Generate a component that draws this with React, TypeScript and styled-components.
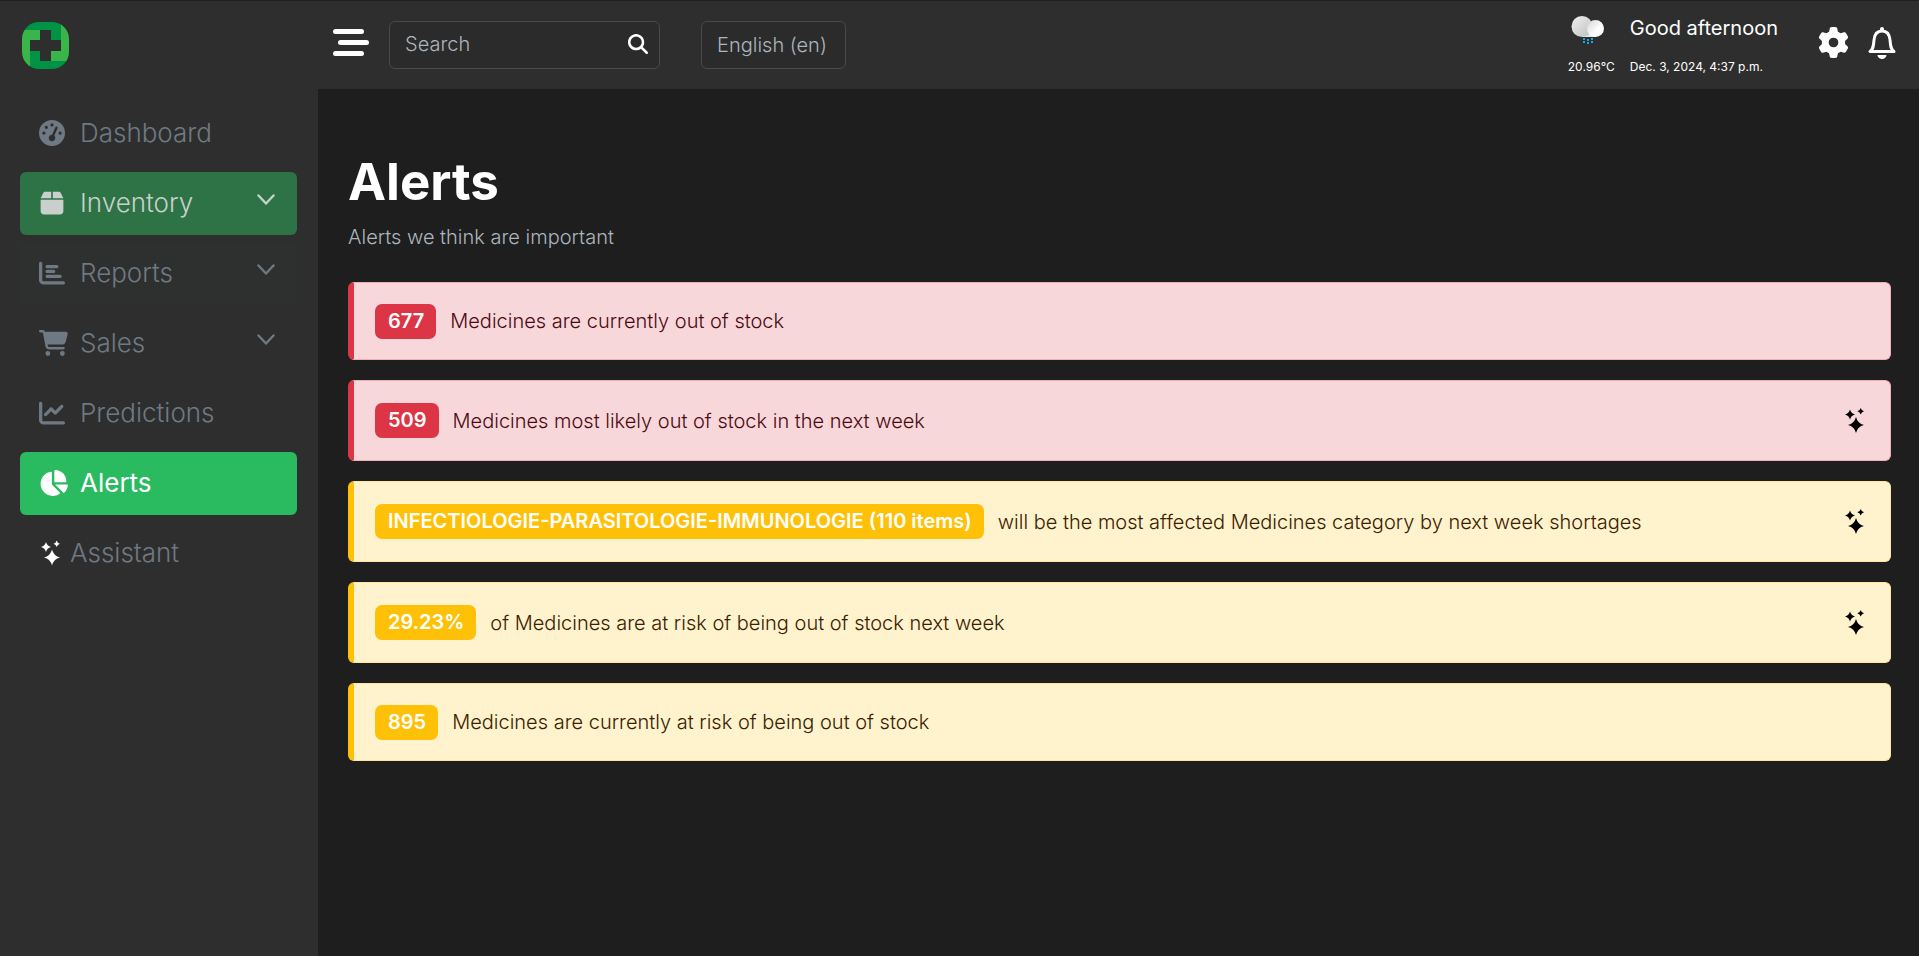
import React from "react";
import styled, { createGlobalStyle } from "styled-components";
import {
  FaGaugeHigh, FaBox, FaChartBar, FaCartShopping, FaChartLine, FaChartPie,
  FaMagnifyingGlass, FaGear,
} from "react-icons/fa6";

const GlobalStyle = createGlobalStyle`
  *, *::before, *::after { box-sizing: border-box; }
  body {
    margin: 0;
    background: #1e1e1e;
    color: #fff;
    font-family: Inter, "Open Sans", sans-serif;
    font-weight: 300;
  }
  button { font: inherit; color: inherit; }
`;

const Shell = styled.div`
  display: grid;
  grid-template-columns: 318px 1fr;
  min-height: 100vh;
  border-top: 1px solid #1e1e1e;
`;

const Sidebar = styled.aside`
  background: #2e2e2e;
  padding: 21px 21px 20px 20px;
`;

const Brand = styled.a`
  display: block;
  width: 51px;
  height: 51px;
  padding: 0 2px;
  margin-bottom: 29px;
  svg { display: block; }
`;

const Nav = styled.nav`
  display: flex;
  flex-direction: column;
  gap: 7px;
`;

type Tone = "plain" | "open" | "hover" | "active";
const toneBack: Record<Tone, string> = {
  plain: "transparent", open: "#2d7346", hover: "#2e302f", active: "#2aba60",
};
const toneText: Record<Tone, string> = {
  plain: "#6f7983", open: "#c9cfcb", hover: "#6f7983", active: "#fff",
};

const NavItem = styled.a<{ $tone: Tone }>`
  display: flex;
  align-items: center;
  height: 63px;
  padding: 0 22px 2px 19px;
  border-radius: 6px;
  background: ${(p) => toneBack[p.$tone]};
  color: ${(p) => toneText[p.$tone]};
  font-size: 26px;
  text-decoration: none;
  font-weight: ${(p) => (p.$tone === "active" ? 400 : 300)};
`;

const NavIcon = styled.span<{ $size?: "narrow" | "wide" }>`
  display: flex;
  width: ${(p) => (p.$size === "narrow" ? 31 : 41)}px;
  padding-left: ${(p) => (p.$size === "narrow" ? 2 : 0)}px;
  svg {
    width: ${(p) => (p.$size === "narrow" ? 19 : p.$size === "wide" ? 29 : 26)}px;
    height: 26px;
  }
`;

const NavLabel = styled.span`
  flex: 1;
`;

const Chevron = styled.svg`
  margin-bottom: 6px;
  fill: none;
  stroke: currentColor;
  stroke-width: 2.4;
  stroke-linecap: round;
  stroke-linejoin: round;
`;

const Main = styled.div`
  display: flex;
  flex-direction: column;
`;

const Topbar = styled.header`
  display: flex;
  align-items: center;
  height: 88px;
  padding: 0 22px 0 15px;
  background: #2e2e2e;
`;

const MenuButton = styled.button`
  display: flex;
  flex-direction: column;
  gap: 6px;
  width: 36px;
  margin-right: 20px;
  padding: 0 0 5px;
  border: 0;
  background: none;
`;

const MenuBar = styled.span<{ $shift?: boolean }>`
  width: 31px;
  height: 5px;
  border-radius: 3px;
  background: #fff;
  margin-left: ${(p) => (p.$shift ? 5 : 0)}px;
`;

const Search = styled.form`
  display: flex;
  align-items: center;
  width: 271px;
  height: 48px;
  margin-right: 41px;
  padding: 0 11px 2px 15px;
  border: 1px solid #4a4a4a;
  border-radius: 6px;
  background: #2b2b2b;
`;

const SearchInput = styled.input`
  flex: 1;
  min-width: 0;
  padding: 0;
  border: 0;
  outline: 0;
  background: none;
  color: #fff;
  font: inherit;
  font-size: 20px;
  &::placeholder { color: #adb5bd; opacity: 1; }
`;

const IconButton = styled.button`
  display: flex;
  padding: 0;
  border: 0;
  background: none;
  color: #fff;
`;

const Language = styled.select`
  appearance: none;
  width: 145px;
  height: 48px;
  padding: 0 15px;
  border: 1px solid #4a4a4a;
  border-radius: 6px;
  background: #2b2b2b;
  color: #adb5bd;
  font: inherit;
  font-size: 20px;
`;

const Status = styled.div`
  display: grid;
  grid-template-columns: 49px auto;
  column-gap: 13px;
  row-gap: 11px;
  margin-left: auto;
  margin-right: 40px;
  padding-bottom: 3px;
`;

const Greeting = styled.span`
  font-size: 20px;
  line-height: 36px;
  font-weight: 400;
`;

const Small = styled.span`
  font-size: 12px;
  line-height: 20px;
  font-weight: 400;
  white-space: nowrap;
`;

const Actions = styled.div`
  display: flex;
  align-items: center;
  gap: 18px;
  padding-bottom: 5px;
`;

const Content = styled.main`
  padding: 63px 28px 40px 30px;
`;

const Title = styled.h1`
  margin: 0;
  font-size: 51px;
  line-height: 60px;
  font-weight: 700;
`;

const Lead = styled.p`
  margin: 9px 0 29px;
  color: #adb5bd;
  font-size: 20px;
  line-height: 32px;
`;

const AlertList = styled.ul`
  display: flex;
  flex-direction: column;
  gap: 20px;
  margin: 0;
  padding: 0;
  list-style: none;
`;

type Level = "danger" | "warning";
const levels = {
  danger: { back: "#f8d7da", edge: "#f1aeb5", main: "#dc3545", text: "#4a0a12" },
  warning: { back: "#fff3cd", edge: "#ffe69c", main: "#ffc107", text: "#3a2000" },
};

const AlertRow = styled.li<{ $level: Level; $tall?: boolean }>`
  display: flex;
  align-items: center;
  min-height: ${(p) => (p.$tall ? 81 : 78)}px;
  padding: 16px 26px 16px 21px;
  border: 1px solid ${(p) => levels[p.$level].edge};
  border-left: 6px solid ${(p) => levels[p.$level].main};
  border-radius: 6px;
  background: ${(p) => levels[p.$level].back};
  color: ${(p) => levels[p.$level].text};
  font-size: 20px;
`;

const Badge = styled.strong<{ $level: Level }>`
  margin-right: 14px;
  padding: 0 12px 0 13px;
  border-radius: 7px;
  background: ${(p) => levels[p.$level].main};
  color: #fff;
  font-size: 20px;
  line-height: 35px;
  font-weight: 600;
`;

const AlertText = styled.span`
  flex: 1;
`;

const SparkIcon = styled.svg`
  display: block;
  fill: currentColor;
`;

/* A four-pointed star with concave sides, centred on (x, y). */
function star(x: number, y: number, r: number) {
  const c = r * 0.2;
  return `M${x} ${y - r}Q${x + c} ${y - c} ${x + r} ${y}Q${x + c} ${y + c} ${x} ${y + r}Q${x - c} ${y + c} ${x - r} ${y}Q${x - c} ${y - c} ${x} ${y - r}Z`;
}

function Sparkles({ color }: { color: string }) {
  return (
    <SparkIcon width="19" height="25" viewBox="0 0 19 25" color={color} aria-hidden>
      <path d={star(11, 17, 8)} />
      <path d={star(5, 6.5, 5)} />
      <path d={star(15.7, 3.3, 3.3)} />
    </SparkIcon>
  );
}

function Logo() {
  return (
    <svg width="47" height="47" viewBox="0 0 47 47" aria-hidden>
      <clipPath id="logo-shape"><rect width="47" height="47" rx="17" /></clipPath>
      <g clipPath="url(#logo-shape)">
        <path fill="#009245" d="M0 0H39V18H29V8H0Z" />
        <path fill="#39b54a" d="M39 0H47V39H29V29H39Z" />
        <path fill="#009245" d="M47 47H8V29H18V39H47Z" />
        <path fill="#39b54a" d="M0 47V8H18V18H8V47Z" />
      </g>
    </svg>
  );
}

function Weather() {
  return (
    <svg width="49" height="36" viewBox="0 0 49 36" aria-hidden>
      <defs>
        <linearGradient id="cloud-back" x1="0" y1="0" x2="1" y2="1">
          <stop offset="0" stopColor="#f2f2f2" />
          <stop offset="1" stopColor="#bdbdbd" />
        </linearGradient>
        <linearGradient id="cloud-front" x1="0" y1="0" x2="1" y2="1">
          <stop offset="0" stopColor="#d4d4d4" />
          <stop offset="0.6" stopColor="#fff" />
        </linearGradient>
      </defs>
      <path fill="#e8e8e8" d="M14 16h14v11H14Z" />
      <circle cx="14" cy="16.500" r="10.500" fill="url(#cloud-back)" />
      <circle cx="27.500" cy="18.500" r="8.500" fill="url(#cloud-front)" />
      <g fill="none" stroke="#1ba5e8" strokeWidth="2" strokeDasharray="2 1">
        <path d="M16 28V34M20 29V35M24 28V34" />
      </g>
    </svg>
  );
}

function Bell() {
  return (
    <svg width="30" height="32" viewBox="0 0 30 32" aria-hidden>
      <path fill="#fff" d="M13 3V2a2 2 0 0 1 4 0v1Z" />
      <path
        fill="none"
        stroke="#fff"
        strokeWidth="3"
        strokeLinejoin="round"
        d="M3 24.500h24c-3-2-3.500-5-4-11.500c-.5-6-3.500-9-8-9s-7.500 3-8 9c-.5 6.500-1 9.500-4 11.500z"
      />
      <path fill="#fff" d="M10.500 28h9a4.500 4 0 0 1-9 0z" />
    </svg>
  );
}

const navItems: { label: string; icon: React.ReactNode; tone: Tone; menu?: boolean; size?: "narrow" | "wide" }[] = [
  { label: "Dashboard", icon: <FaGaugeHigh />, tone: "plain" },
  { label: "Inventory", icon: <FaBox />, tone: "open", menu: true },
  { label: "Reports", icon: <FaChartBar />, tone: "hover", menu: true },
  { label: "Sales", icon: <FaCartShopping />, tone: "plain", menu: true, size: "wide" },
  { label: "Predictions", icon: <FaChartLine />, tone: "plain" },
  { label: "Alerts", icon: <FaChartPie />, tone: "active", size: "wide" },
  { label: "Assistant", icon: <Sparkles color="#fff" />, tone: "plain", size: "narrow" },
];

const alerts: { level: Level; badge: string; text: string; ai?: boolean }[] = [
  { level: "danger", badge: "677", text: "Medicines are currently out of stock" },
  { level: "danger", badge: "509", text: "Medicines most likely out of stock in the next week", ai: true },
  { level: "warning", badge: "INFECTIOLOGIE-PARASITOLOGIE-IMMUNOLOGIE (110 items)", text: "will be the most affected Medicines category by next week shortages", ai: true },
  { level: "warning", badge: "29.23%", text: "of Medicines are at risk of being out of stock next week", ai: true },
  { level: "warning", badge: "895", text: "Medicines are currently at risk of being out of stock" },
];

export default function App() {
  return (
    <>
      <GlobalStyle />
      <Shell>
        <Sidebar>
          <Brand href="#" aria-label="Home"><Logo /></Brand>
          <Nav>
            {navItems.map((item) => (
              <NavItem key={item.label} href="#" $tone={item.tone}>
                <NavIcon $size={item.size}>{item.icon}</NavIcon>
                <NavLabel>{item.label}</NavLabel>
                {item.menu && (
                  <Chevron width="18" height="11" viewBox="0 0 18 11" aria-hidden>
                    <path d="M1.500 1.500L9 9.500L16.500 1.500" />
                  </Chevron>
                )}
              </NavItem>
            ))}
          </Nav>
        </Sidebar>
        <Main>
          <Topbar>
            <MenuButton aria-label="Toggle menu">
              <MenuBar /><MenuBar $shift /><MenuBar />
            </MenuButton>
            <Search>
              <SearchInput aria-label="Search" placeholder="Search" />
              <IconButton type="button" aria-label="Submit search"><FaMagnifyingGlass size={20} /></IconButton>
            </Search>
            <Language aria-label="Language"><option>English (en)</option></Language>
            <Status>
              <Weather />
              <Greeting>Good afternoon</Greeting>
              <Small>20.96°C</Small>
              <Small>Dec. 3, 2024, 4:37 p.m.</Small>
            </Status>
            <Actions>
              <IconButton aria-label="Settings"><FaGear size={31} /></IconButton>
              <IconButton aria-label="Notifications"><Bell /></IconButton>
            </Actions>
          </Topbar>
          <Content>
            <Title>Alerts</Title>
            <Lead>Alerts we think are important</Lead>
            <AlertList>
              {alerts.map((a) => (
                <AlertRow key={a.badge} $level={a.level} $tall={a.ai}>
                  <Badge $level={a.level}>{a.badge}</Badge>
                  <AlertText>{a.text}</AlertText>
                  {a.ai && <Sparkles color="#000" />}
                </AlertRow>
              ))}
            </AlertList>
          </Content>
        </Main>
      </Shell>
    </>
  );
}
